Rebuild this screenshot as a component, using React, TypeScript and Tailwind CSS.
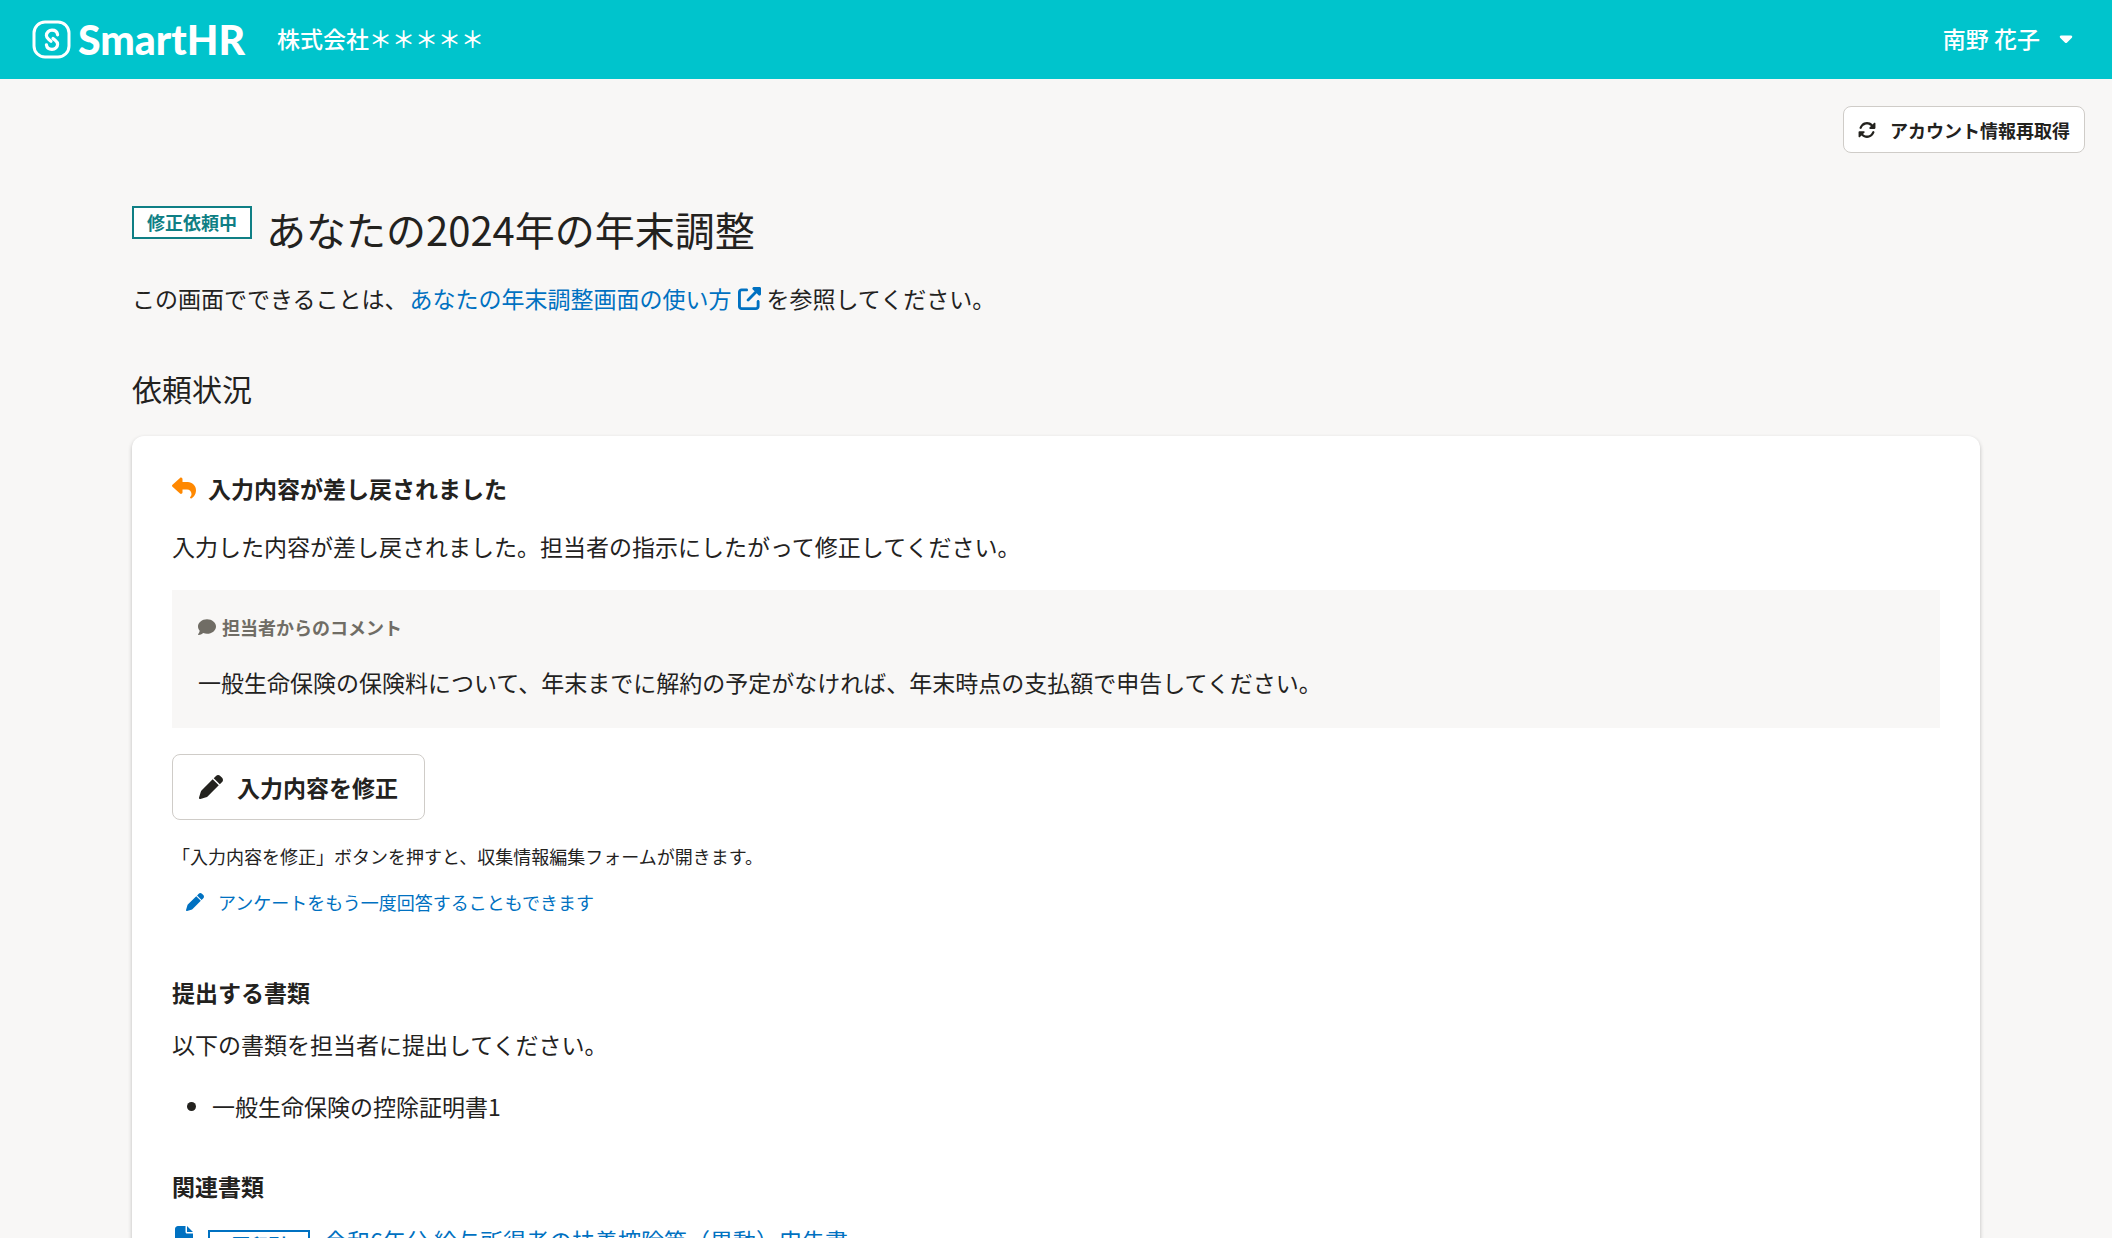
import {
  FaCaretDown,
  FaComment,
  FaFile,
  FaPen,
  FaReply,
  FaRotate,
  FaUpRightFromSquare,
} from "react-icons/fa6";

function Logo() {
  return (
    <a href="#" className="flex items-center gap-1.5 text-white">
      <svg width="40" height="40" viewBox="0 0 40 40" fill="none" stroke="currentColor" aria-hidden="true">
        <rect x="2" y="2" width="35" height="35" rx="11" strokeWidth="3" />
        <g strokeWidth="3.2" strokeLinecap="round">
          <path d="M25.6 14.8C25.2 12 23 10.2 20 10.2C16.9 10.2 14.4 12.6 14.4 15.4C14.4 17.3 15.3 18.2 16.8 19.4L19 21.2" />
          <path d="M14.4 24.8C14.8 27.6 17 29.4 20 29.4C23.1 29.4 25.6 27 25.6 24.2C25.6 22.3 24.7 21.4 23.2 20.2L21 18.4" />
        </g>
      </svg>
      <span className="font-[Lato] text-[41px] leading-[44px] font-black">SmartHR</span>
    </a>
  );
}

function Header() {
  return (
    <header className="flex h-[79px] items-center justify-between bg-[#00c4cc] px-8 font-medium text-white">
      <div className="flex items-center gap-8">
        <Logo />
        <p className="pb-1">株式会社＊＊＊＊＊</p>
      </div>
      <button type="button" className="flex items-center gap-4 px-1 pb-1">
        南野 花子
        <FaCaretDown className="size-5" />
      </button>
    </header>
  );
}

function RequestStatus() {
  return (
    <section className="mt-[54px]">
      <h2 className="text-[30px] leading-10">依頼状況</h2>
      <div className="mt-7 rounded-xl bg-white px-10 pt-9 pb-10 shadow-[0_2px_4px_rgba(0,0,0,0.24)]">
        <h3 className="flex items-center gap-3 font-bold">
          <FaReply className="size-6 text-[#ff8800]" />
          入力内容が差し戻されました
        </h3>
        <p className="mt-[26px]">入力した内容が差し戻されました。担当者の指示にしたがって修正してください。</p>

        <div className="mt-7 bg-[#f8f7f6] px-[26px] pt-6 pb-[30px]">
          <p className="flex items-center gap-1.5 text-[18px] leading-[26px] font-bold text-[#706d65]">
            <FaComment />
            担当者からのコメント
          </p>
          <p className="mt-[26px]">
            一般生命保険の保険料について、年末までに解約の予定がなければ、年末時点の支払額で申告してください。
          </p>
        </div>

        <button
          type="button"
          className="mt-[26px] flex h-[66px] items-center gap-3.5 rounded-lg border border-[#cfccc8] bg-white px-[26px] font-bold"
        >
          <FaPen className="size-6" />
          入力内容を修正
        </button>
        <p className="mt-6 text-[18px] leading-6">
          「入力内容を修正」ボタンを押すと、収集情報編集フォームが開きます。
        </p>
        <a href="#" className="mt-[22px] ml-3.5 flex w-fit items-center gap-3.5 text-[18px] leading-6 text-[#0071c1]">
          <FaPen />
          アンケートをもう一度回答することもできます
        </a>

        <h3 className="mt-[62px] font-bold">提出する書類</h3>
        <p className="mt-5">以下の書類を担当者に提出してください。</p>
        <ul className="mt-[30px] list-disc pl-10">
          <li>一般生命保険の控除証明書1</li>
        </ul>

        <h3 className="mt-12 font-bold">関連書類</h3>
        <a href="#" className="mt-[22px] flex items-start text-[#0071c1]">
          <FaFile className="mt-0.5 size-6" />
          <span className="mt-1.5 mr-3.5 ml-3 border-2 border-[#0071c1] px-[22px] text-[18px] leading-6 font-bold">
            要印刷
          </span>
          令和6年分 給与所得者の扶養控除等（異動）申告書
        </a>
      </div>
    </section>
  );
}

export default function App() {
  return (
    <div className="h-screen overflow-hidden bg-[#f8f7f6] font-['Noto_Sans_CJK_JP',sans-serif] text-[23px] leading-8 text-[#23221e]">
      <Header />
      <div className="flex justify-end px-[27px] pt-[27px]">
        <button
          type="button"
          className="flex h-[47px] items-center gap-3.5 rounded-lg border border-[#cfccc8] bg-white px-3.5 text-[18px] leading-6 font-bold"
        >
          <FaRotate />
          アカウント情報再取得
        </button>
      </div>

      <main className="px-[132px] pt-[53px]">
        <div className="flex items-start gap-3.5">
          <span className="border-2 border-[#0f7f85] bg-white px-[13px] text-[18px] leading-[29px] font-bold text-[#0f7f85]">
            修正依頼中
          </span>
          <h1 className="text-[40px] leading-[46px]">あなたの2024年の年末調整</h1>
        </div>
        <p className="mt-[30px] flex items-center">
          この画面でできることは、
          <a href="#" className="mr-1.5 ml-0.5 flex items-center gap-1.5 text-[#0071c1]">
            あなたの年末調整画面の使い方
            <FaUpRightFromSquare />
          </a>
          を参照してください。
        </p>
        <RequestStatus />
      </main>
    </div>
  );
}
